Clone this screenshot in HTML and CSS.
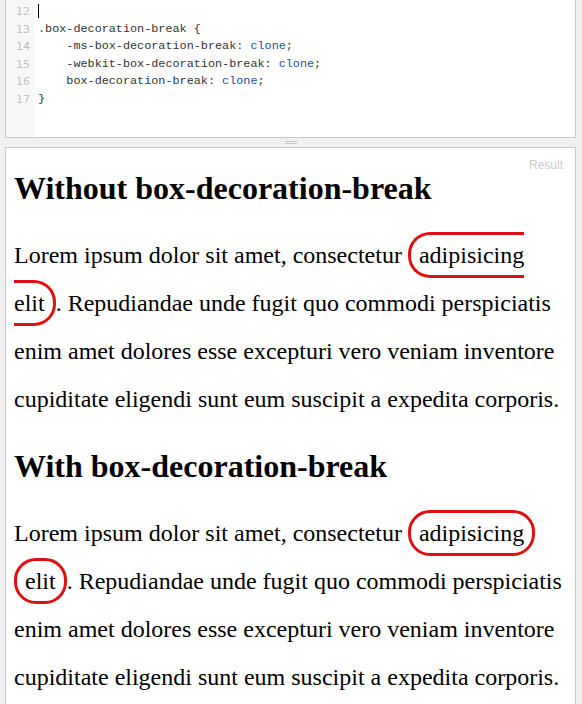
FILE: index.html
```html
<!DOCTYPE html>
<html>
<head>
<meta charset="utf-8">
<link rel="stylesheet" href="styles.css">
</head>
<body>
<div class="page">
  <section class="editor">
    <div class="gutter">
      <div class="ln">12</div>
      <div class="ln">13</div>
      <div class="ln">14</div>
      <div class="ln">15</div>
      <div class="ln">16</div>
      <div class="ln">17</div>
    </div>
    <div class="code">
      <div class="line"><span class="cursor"></span></div>
      <div class="line">.box-decoration-break {</div>
      <div class="line">    -ms-box-decoration-break: <span class="val">clone</span>;</div>
      <div class="line">    -webkit-box-decoration-break: <span class="val">clone</span>;</div>
      <div class="line">    box-decoration-break: <span class="val">clone</span>;</div>
      <div class="line">}</div>
    </div>
  </section>
  <div class="divider"><span class="handle"></span></div>
  <section class="result">
    <span class="result-label">Result</span>
    <h2 class="title first">Without box-decoration-break</h2>
    <p class="text">Lorem ipsum dolor sit amet, consectetur <span class="hl">adipisicing elit</span>. Repudiandae unde fugit quo commodi perspiciatis enim amet dolores esse excepturi vero veniam inventore cupiditate eligendi sunt eum suscipit a expedita corporis.</p>
    <h2 class="title">With box-decoration-break</h2>
    <p class="text">Lorem ipsum dolor sit amet, consectetur <span class="hl clone">adipisicing elit</span>. Repudiandae unde fugit quo commodi perspiciatis enim amet dolores esse excepturi vero veniam inventore cupiditate eligendi sunt eum suscipit a expedita corporis.</p>
  </section>
</div>
</body>
</html>
```
FILE: styles.css
```css
html, body {
  margin: 0;
  padding: 0;
  background: #f0f0f0;
  overflow: hidden;
}
.page {
  width: 582px;
  height: 704px;
  display: flex;
  flex-direction: column;
  padding: 0 6px 0 5px;
  box-sizing: border-box;
}
.editor {
  display: flex;
  height: 138px;
  flex: none;
  background: #fff;
  border: 1px solid #c8c8c8;
  border-top: none;
  box-sizing: border-box;
}
.gutter {
  width: 28px;
  background: #f7f7f7;
  padding-top: 3px;
  box-sizing: border-box;
}
.ln {
  height: 17.6px;
  line-height: 17.6px;
  text-align: right;
  padding-right: 4px;
  font-family: "DejaVu Sans", sans-serif;
  font-size: 11px;
  color: #c2c2c2;
}
.code {
  padding-top: 3px;
  padding-left: 4px;
  font-family: "Liberation Mono", monospace;
  font-size: 11.8px;
  color: #333;
}
.line {
  height: 17.6px;
  line-height: 17.6px;
  white-space: pre;
}
.cursor {
  display: inline-block;
  width: 1px;
  height: 14px;
  background: #000;
  vertical-align: middle;
}
.val { color: #1d4f9c; }
.divider {
  height: 9px;
  flex: none;
  display: flex;
  justify-content: center;
  align-items: center;
}
.handle {
  width: 12px;
  height: 3px;
  border-top: 1px solid #c8c8c8;
  border-bottom: 1px solid #c8c8c8;
  box-sizing: border-box;
}
.result {
  position: relative;
  flex: 1;
  background: #fff;
  border: 1px solid #c8c8c8;
  border-bottom: none;
  padding: 0 8px;
  box-sizing: border-box;
  font-family: "Liberation Serif", serif;
  color: #000;
}
.result-label {
  position: absolute;
  top: 10px;
  right: 12px;
  font-family: "Liberation Sans", sans-serif;
  font-size: 12px;
  color: #ccc;
}
.title {
  font-size: 32px;
  font-weight: bold;
  margin: 25px 0 0;
  line-height: 36px;
}
.title.first {
  margin-top: 22px;
}
.text {
  font-size: 24px;
  line-height: 48px;
  margin: 25px 0 0;
}
.hl {
  border: 3px solid #e01010;
  border-radius: 22px;
  padding: 7px 8px;
}
.hl.clone {
  -webkit-box-decoration-break: clone;
  box-decoration-break: clone;
}
```
